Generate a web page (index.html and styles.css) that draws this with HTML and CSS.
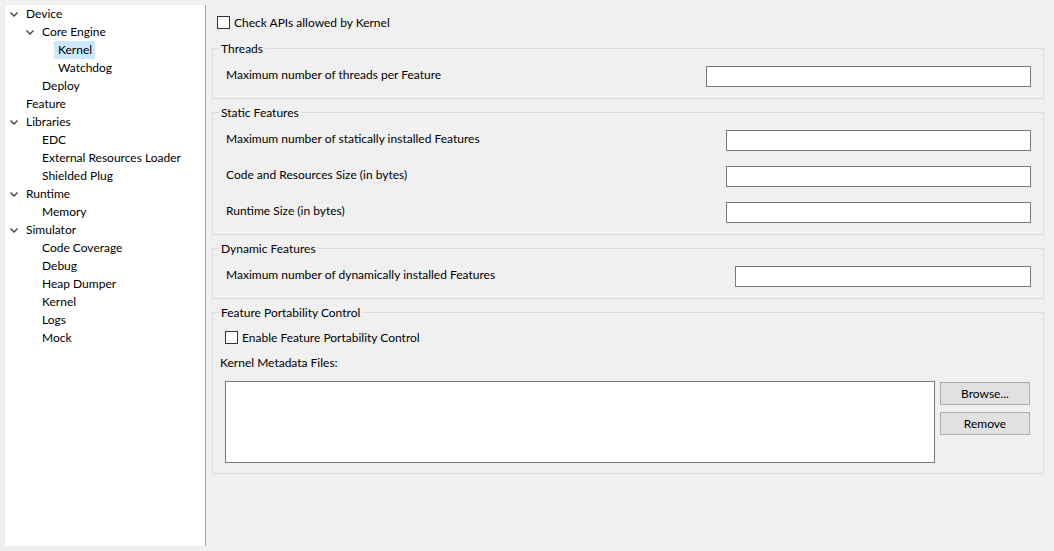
FILE: index.html
```html
<!DOCTYPE html>
<html>
<head>
<meta charset="utf-8">
<link rel="stylesheet" href="styles.css">
</head>
<body>
<div class="window">
  <nav class="tree">
    <div class="row lvl0"><span class="twisty"><svg width="16" height="18" viewBox="0 0 16 18"><polyline points="4.5,7.5 8,11 11.5,7.5" /></svg></span><span class="label">Device</span></div>
    <div class="row lvl1"><span class="twisty"><svg width="16" height="18" viewBox="0 0 16 18"><polyline points="4.5,7.5 8,11 11.5,7.5" /></svg></span><span class="label">Core Engine</span></div>
    <div class="row lvl2"><span class="twisty"></span><span class="label selected">Kernel</span></div>
    <div class="row lvl2"><span class="twisty"></span><span class="label">Watchdog</span></div>
    <div class="row lvl1"><span class="twisty"></span><span class="label">Deploy</span></div>
    <div class="row lvl0"><span class="twisty"></span><span class="label">Feature</span></div>
    <div class="row lvl0"><span class="twisty"><svg width="16" height="18" viewBox="0 0 16 18"><polyline points="4.5,7.5 8,11 11.5,7.5" /></svg></span><span class="label">Libraries</span></div>
    <div class="row lvl1"><span class="twisty"></span><span class="label">EDC</span></div>
    <div class="row lvl1"><span class="twisty"></span><span class="label">External Resources Loader</span></div>
    <div class="row lvl1"><span class="twisty"></span><span class="label">Shielded Plug</span></div>
    <div class="row lvl0"><span class="twisty"><svg width="16" height="18" viewBox="0 0 16 18"><polyline points="4.5,7.5 8,11 11.5,7.5" /></svg></span><span class="label">Runtime</span></div>
    <div class="row lvl1"><span class="twisty"></span><span class="label">Memory</span></div>
    <div class="row lvl0"><span class="twisty"><svg width="16" height="18" viewBox="0 0 16 18"><polyline points="4.5,7.5 8,11 11.5,7.5" /></svg></span><span class="label">Simulator</span></div>
    <div class="row lvl1"><span class="twisty"></span><span class="label">Code Coverage</span></div>
    <div class="row lvl1"><span class="twisty"></span><span class="label">Debug</span></div>
    <div class="row lvl1"><span class="twisty"></span><span class="label">Heap Dumper</span></div>
    <div class="row lvl1"><span class="twisty"></span><span class="label">Kernel</span></div>
    <div class="row lvl1"><span class="twisty"></span><span class="label">Logs</span></div>
    <div class="row lvl1"><span class="twisty"></span><span class="label">Mock</span></div>
  </nav>

  <main class="content">
    <div class="check top-check"><span class="box"></span><span class="check-text">Check APIs allowed by Kernel</span></div>

    <fieldset class="group">
      <legend>Threads</legend>
      <div class="group-body">
        <div class="field"><span class="field-label">Maximum number of threads per Feature</span><input class="text-input w325" type="text"></div>
      </div>
    </fieldset>

    <fieldset class="group">
      <legend>Static Features</legend>
      <div class="group-body">
        <div class="field"><span class="field-label">Maximum number of statically installed Features</span><input class="text-input w305" type="text"></div>
        <div class="field"><span class="field-label">Code and Resources Size (in bytes)</span><input class="text-input w305" type="text"></div>
        <div class="field"><span class="field-label">Runtime Size (in bytes)</span><input class="text-input w305" type="text"></div>
      </div>
    </fieldset>

    <fieldset class="group">
      <legend>Dynamic Features</legend>
      <div class="group-body">
        <div class="field"><span class="field-label">Maximum number of dynamically installed Features</span><input class="text-input w296" type="text"></div>
      </div>
    </fieldset>

    <fieldset class="group">
      <legend>Feature Portability Control</legend>
      <div class="group-body portability">
        <div class="check inner-check"><span class="box"></span><span class="check-text">Enable Feature Portability Control</span></div>
        <div class="plain-label">Kernel Metadata Files:</div>
        <div class="files">
          <div class="list-box"></div>
          <div class="buttons">
            <button class="btn" type="button">Browse...</button>
            <button class="btn" type="button">Remove</button>
          </div>
        </div>
      </div>
    </fieldset>
  </main>
</div>
</body>
</html>
```

FILE: styles.css
```css
* { box-sizing: border-box; }

html, body {
  margin: 0;
  padding: 0;
  background: #f0f0f0;
  width: 1054px;
  height: 551px;
  overflow: hidden;
}

body {
  font-family: Lato, "Liberation Sans", sans-serif;
  font-size: 12px;
  color: #000;
}

.window {
  display: flex;
  height: 551px;
}

.tree {
  width: 201px;
  margin: 5px 0 5px 5px;
  background: #fff;
  border-right: 1px solid #a0a0a0;
  flex-shrink: 0;
}

.row {
  display: flex;
  align-items: center;
  height: 18px;
  white-space: nowrap;
}

.lvl0 { padding-left: 1px; }
.lvl1 { padding-left: 17px; }
.lvl2 { padding-left: 33px; }

.twisty {
  width: 16px;
  height: 18px;
  flex-shrink: 0;
}

.twisty svg {
  display: block;
}

.twisty polyline {
  fill: none;
  stroke: #404040;
  stroke-width: 1.4;
}

.label {
  display: block;
  height: 18px;
  line-height: 18px;
  padding: 0 3px 0 4px;
}

.label.selected {
  background: #cce8ff;
}

.content {
  flex: 1;
  padding: 13px 10px 0 6px;
}

.check {
  display: flex;
  align-items: center;
  height: 18px;
}

.box {
  width: 13px;
  height: 13px;
  border: 1px solid #333;
  background: #fff;
  flex-shrink: 0;
}

.check-text {
  margin-left: 4px;
}

.top-check {
  margin-left: 5px;
  margin-bottom: 9px;
}

.group {
  margin: 0 0 5px 0;
  padding: 0;
  min-width: 0;
  border: 1px solid #dcdcdc;
}

.group legend {
  margin-left: 6px;
  padding: 1px 2px 0 2px;
  line-height: 16px;
  height: 16px;
}

.group-body {
  padding: 10px 12px 11px 13px;
  display: flex;
  flex-direction: column;
  gap: 15px;
}

.field {
  display: flex;
  align-items: center;
  justify-content: space-between;
  height: 21px;
}

.field-label {
  margin-top: -5px;
}

.text-input {
  height: 21px;
  border: 1px solid #7a7a7a;
  background: #fff;
  margin: 0;
  padding: 0 3px;
  font: inherit;
}

.w325 { width: 325px; }
.w305 { width: 305px; }
.w296 { width: 296px; }

.portability {
  padding: 8px 12px 10px 7px;
  gap: 0;
}

.inner-check {
  margin-left: 5px;
}

.plain-label {
  height: 18px;
  line-height: 18px;
  margin-top: 8px;
}

.files {
  display: flex;
  margin-top: 9px;
  margin-left: 5px;
}

.list-box {
  width: 710px;
  height: 82px;
  border: 1px solid #7a7a7a;
  background: #fff;
}

.buttons {
  display: flex;
  flex-direction: column;
  gap: 7px;
  margin-left: 5px;
  padding-top: 1px;
  flex: 1;
}

.btn {
  height: 23px;
  width: 90px;
  margin: 0;
  padding: 0;
  background: #e1e1e1;
  border: 1px solid #adadad;
  font: inherit;
  color: #000;
}
```
